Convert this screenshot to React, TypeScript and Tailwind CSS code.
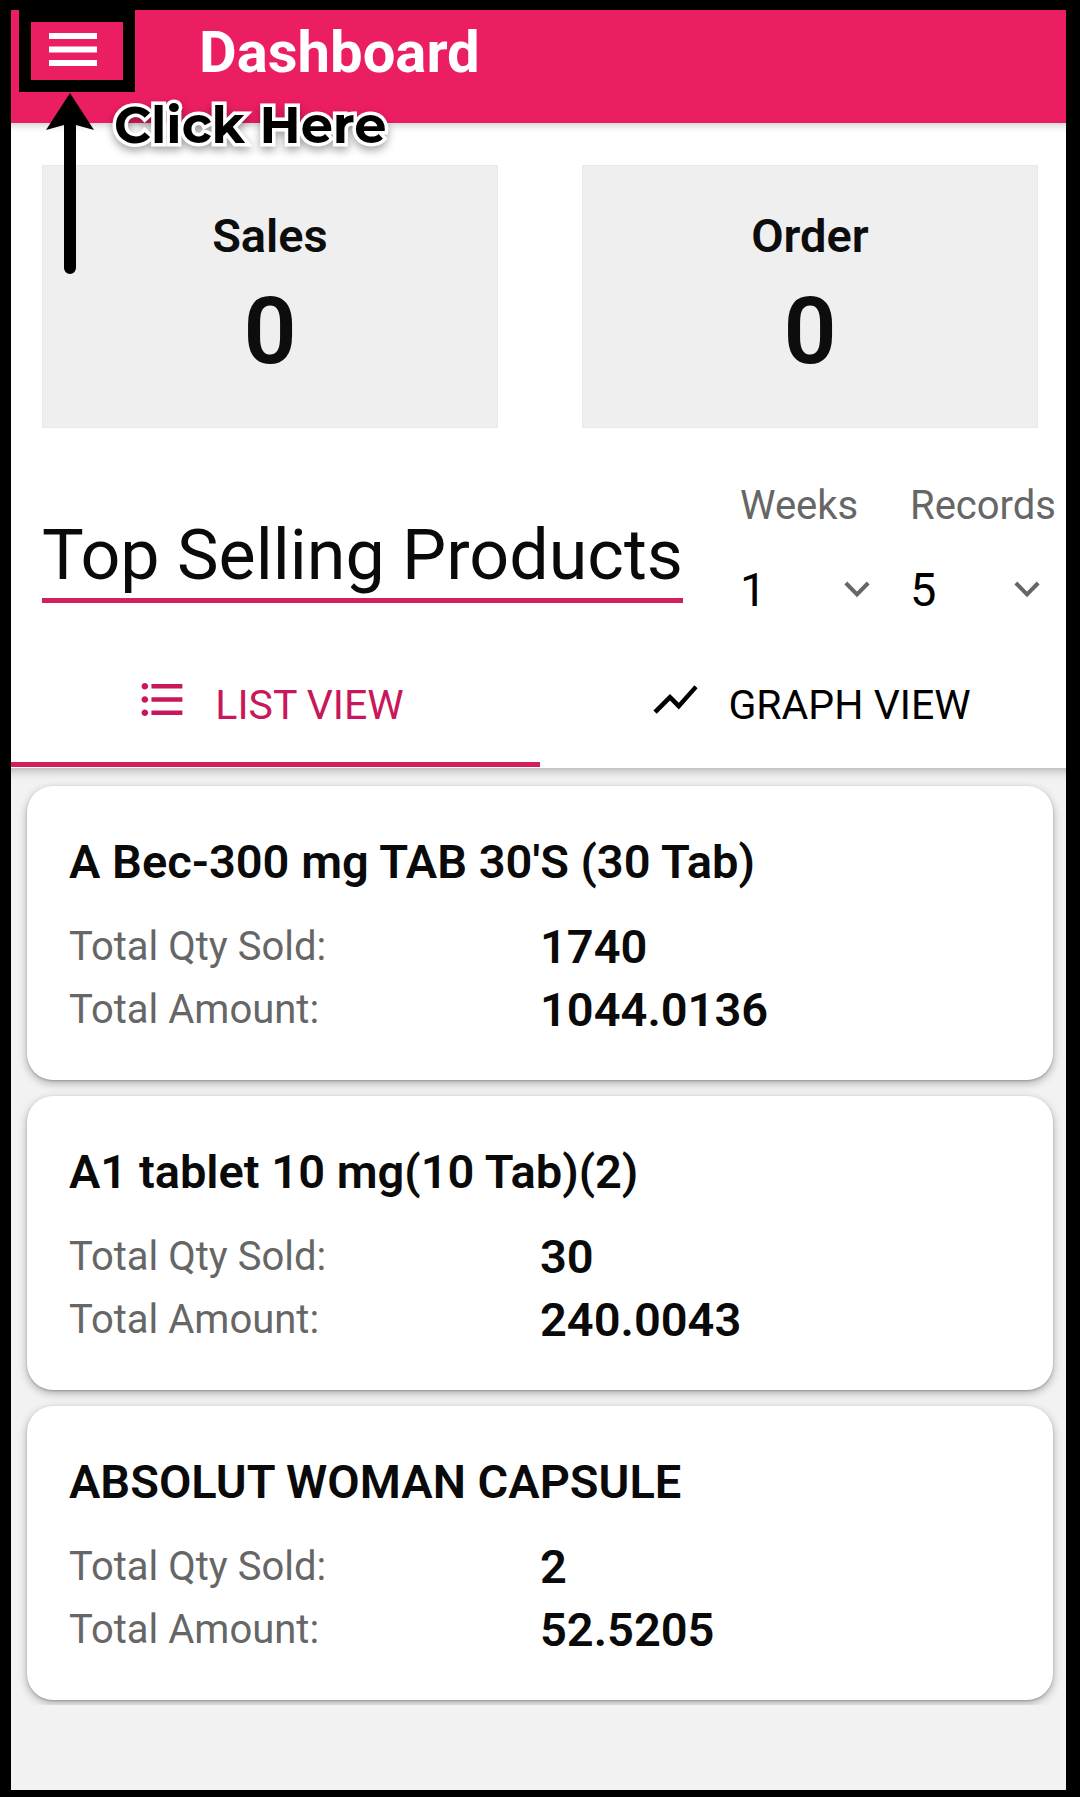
import { useState } from "react";
import { MdFormatListBulleted, MdShowChart } from "react-icons/md";

const stats = [
  { label: "Sales", value: 0 },
  { label: "Order", value: 0 },
];

const products = [
  { name: "A Bec-300 mg TAB 30'S (30 Tab)", qty: "1740", amount: "1044.0136" },
  { name: "A1 tablet 10 mg(10 Tab)(2)", qty: "30", amount: "240.0043" },
  { name: "ABSOLUT WOMAN CAPSULE", qty: "2", amount: "52.5205" },
];

function Picker({ id, label, value, options, onChange }: {
  id: string;
  label: string;
  value: string;
  options: string[];
  onChange: (value: string) => void;
}) {
  return (
    <div className="w-[170px]">
      <label htmlFor={id} className="block text-[40px] leading-[48px] text-[#666]">{label}</label>
      <div className="relative mt-8">
        <select
          id={id}
          value={value}
          onChange={e => onChange(e.target.value)}
          className="block w-full h-14 appearance-none bg-transparent text-[47px] leading-[56px] text-black"
        >
          {options.map(o => <option key={o}>{o}</option>)}
        </select>
        <svg viewBox="0 0 26 17" className="absolute right-10 top-[19px] w-[26px] h-[17px] pointer-events-none" fill="none" stroke="#666" strokeWidth="4">
          <path d="M1.8 2 L13 13.4 L24.2 2" />
        </svg>
      </div>
    </div>
  );
}

function ProductCard({ name, qty, amount }: { name: string; qty: string; amount: string }) {
  return (
    <article className="bg-white rounded-[26px] px-[42px] pt-[46px] pb-[39px] shadow-[0_3px_8px_rgba(0,0,0,0.3),0_1px_2px_rgba(0,0,0,0.2)]">
      <h3 className="text-[47px] leading-[60px] font-semibold text-[#0a0a0a]">{name}</h3>
      <dl className="mt-[23px] grid grid-cols-2 items-center leading-[63px]">
        <dt className="text-[40px] text-[#666]">Total Qty Sold:</dt>
        <dd className="text-[47px] font-semibold text-[#0a0a0a]">{qty}</dd>
        <dt className="text-[40px] text-[#666]">Total Amount:</dt>
        <dd className="text-[47px] font-semibold text-[#0a0a0a]">{amount}</dd>
      </dl>
    </article>
  );
}

export default function App() {
  const [weeks, setWeeks] = useState("1");
  const [records, setRecords] = useState("5");
  const [view, setView] = useState("list");

  const tabClass = "h-[125px] pt-2 flex items-center justify-center gap-[26px] border-b-[5px] text-[41px]";
  const activeTab = "border-[#d41f5e] text-[#c8175a]";
  const idleTab = "border-transparent text-black";

  return (
    <div className="relative min-h-screen bg-[#f2f2f2] font-[Roboto,sans-serif]">
      <header className="relative z-20 h-[123px] pt-2.5 pl-[19px] flex items-start bg-[#ec1e62] shadow-[0_2px_8px_rgba(0,0,0,0.2)]">
        <button type="button" aria-label="Open menu" className="w-[116px] h-[82px] border-[12px] border-black flex items-center justify-center">
          <svg viewBox="0 0 48 33" className="w-12 h-[33px] mr-2 mb-[3px]" fill="#fff">
            <path d="M0 0h48v6H0zM0 13.5h48v6H0zM0 27h48v6H0z" />
          </svg>
        </button>
        <h1 className="ml-16 text-[58px] leading-[84px] font-bold text-white">Dashboard</h1>
      </header>

      <div className="relative z-10 bg-white">
        <div className="grid grid-cols-2 gap-[84px] px-[42px] pt-[42px]">
          {stats.map(s => (
            <div key={s.label} className="border border-[#e9e9e9] bg-[#efefef] pt-[42px] pb-[39px] text-center text-[#0d0d0d]">
              <h2 className="text-[47px] leading-[56px] font-semibold">{s.label}</h2>
              <p className="mt-3 text-[93px] leading-[112px] font-semibold">{s.value}</p>
            </div>
          ))}
        </div>

        <div className="flex items-end justify-between pl-[42px] pt-[54px]">
          <h2 className="mb-[15px] pb-[3px] border-b-[5px] border-[#d41f5e] text-[70px] leading-[80px] text-[#0a0a0a] whitespace-nowrap">
            Top Selling Products
          </h2>
          <div className="flex">
            <Picker id="weeks" label="Weeks" value={weeks} options={["1", "2", "3", "4"]} onChange={setWeeks} />
            <Picker id="records" label="Records" value={records} options={["5", "10", "15", "20"]} onChange={setRecords} />
          </div>
        </div>
      </div>

      <div role="tablist" className="relative grid grid-cols-2 bg-white pt-6 pb-px shadow-[0_2px_10px_rgba(0,0,0,0.3)]">
        <button type="button" role="tab" aria-selected={view === "list"} onClick={() => setView("list")} className={`${tabClass} ${view === "list" ? activeTab : idleTab}`}>
          <MdFormatListBulleted className="size-[53px] mb-3.5" />
          LIST VIEW
        </button>
        <button type="button" role="tab" aria-selected={view === "graph"} onClick={() => setView("graph")} className={`${tabClass} ${view === "graph" ? activeTab : idleTab}`}>
          <MdShowChart className="size-[53px] mb-3.5" />
          GRAPH VIEW
        </button>
      </div>

      <main className="flex flex-col gap-4 overflow-hidden pt-[18px] px-[27px] pb-[5px]">
        {products.map(p => <ProductCard key={p.name} {...p} />)}
      </main>

      {/* Tutorial callout pointing at the menu button */}
      <svg viewBox="0 0 48 182" className="absolute z-30 left-[46px] top-[93px] w-12 h-[182px] pointer-events-none">
        <path d="M24 0 L48 37 L30 32 V175 A6 6 0 0 1 18 175 V32 L0 37 Z" />
      </svg>
      <p className="absolute z-30 left-[114px] top-[93px] text-[51px] leading-[64px] font-bold font-[Montserrat,Inter,sans-serif] text-black whitespace-nowrap pointer-events-none [-webkit-text-stroke:7px_white] [paint-order:stroke_fill] drop-shadow-[0_4px_4px_rgba(0,0,0,0.35)]">
        Click Here
      </p>

      <div className="absolute z-30 inset-0 border-black border-t-[10px] border-l-[11px] border-r-[14px] border-b-[7px] pointer-events-none" />
    </div>
  );
}
